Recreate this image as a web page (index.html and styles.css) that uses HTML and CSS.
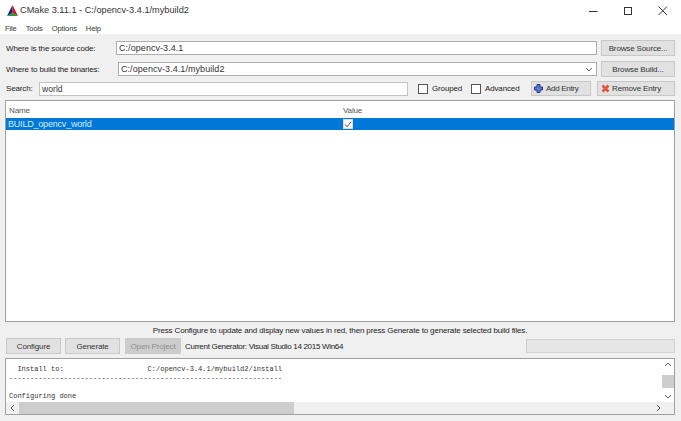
FILE: index.html
```
<!DOCTYPE html>
<html lang="en">
<head>
<meta charset="utf-8">
<title>CMake 3.11.1</title>
<link rel="stylesheet" href="styles.css">
</head>
<body>
<div class="window">
  <header class="titlebar">
    <svg class="app-icon" width="13" height="13" viewBox="0 0 13 13"><polygon points="6.5,1 1,12 6.5,9" fill="#1a1a9c"/><polygon points="6.5,1 12,12 6.5,9" fill="#d01818"/><polygon points="1,12 12,12 6.5,9" fill="#1a9c2a"/></svg>
    <span class="title">CMake 3.11.1 - C:/opencv-3.4.1/mybuild2</span>
    <div class="winbtns">
      <svg width="14" height="14" viewBox="0 0 14 14"><path d="M1 7.5H9.5" stroke="#333" fill="none"/></svg>
      <svg width="14" height="14" viewBox="0 0 14 14"><rect x="2.5" y="3.5" width="7" height="7" stroke="#333" fill="none"/></svg>
      <svg width="14" height="14" viewBox="0 0 14 14"><path d="M2.5 2.5L11 11M11 2.5L2.5 11" stroke="#333" fill="none"/></svg>
    </div>
  </header>
  <nav class="menubar"><span>File</span><span>Tools</span><span>Options</span><span>Help</span></nav>
  <main class="content">
    <div class="row row-source">
      <label class="lbl lbl-source">Where is the source code:</label>
      <div class="input grow">C:/opencv-3.4.1</div>
      <button class="btn btn-browse">Browse Source...</button>
    </div>
    <div class="row row-build">
      <label class="lbl lbl-build">Where to build the binaries:</label>
      <div class="input grow combo">C:/opencv-3.4.1/mybuild2
        <svg width="8" height="5" viewBox="0 0 8 5"><path d="M1 1L4 4L7 1" stroke="#666" fill="none"/></svg>
      </div>
      <button class="btn btn-browse">Browse Build...</button>
    </div>
    <div class="row row-search">
      <label class="lbl lbl-search">Search:</label>
      <div class="input search">world</div>
      <span class="check first"><i class="box"></i>Grouped</span>
      <span class="check"><i class="box"></i>Advanced</span>
      <button class="btn btn-add"><svg width="9" height="9" viewBox="0 0 9 9"><path d="M3 0.5H6V3H8.5V6H6V8.5H3V6H0.5V3H3Z" fill="#5a7fd0" stroke="#25348a"/></svg>Add Entry</button>
      <button class="btn btn-remove"><svg width="9" height="9" viewBox="0 0 9 9"><path d="M1.5 1.5L7.5 7.5M7.5 1.5L1.5 7.5" stroke="#e0553a" stroke-width="2.6"/></svg>Remove Entry</button>
    </div>
    <section class="table">
      <div class="thead"><span class="col-name">Name</span><span>Value</span></div>
      <div class="tr"><span class="col-name">BUILD_opencv_world</span><i class="box checked"><svg width="9" height="9" viewBox="0 0 9 9"><path d="M1 4.5L3.5 7L8 1.5" stroke="#333" fill="none"/></svg></i></div>
    </section>
    <p class="status">Press Configure to update and display new values in red, then press Generate to generate selected build files.</p>
    <div class="row row-actions">
      <button class="btn btn-act">Configure</button>
      <button class="btn btn-act">Generate</button>
      <button class="btn btn-open" disabled>Open Project</button>
      <span class="generator">Current Generator: Visual Studio 14 2015 Win64</span>
      <div class="progress"></div>
    </div>
    <section class="log">
      <div class="log-main">
        <pre class="log-text">  Install to:                    C:/opencv-3.4.1/mybuild2/install
-----------------------------------------------------------------

Configuring done</pre>
        <div class="vscroll">
          <svg width="8" height="5" viewBox="0 0 8 5"><path d="M1 4L4 1L7 4" stroke="#555" fill="none"/></svg>
          <div class="vtrack"><div class="vthumb"></div></div>
          <svg width="8" height="5" viewBox="0 0 8 5"><path d="M1 1L4 4L7 1" stroke="#555" fill="none"/></svg>
        </div>
      </div>
      <div class="hscroll">
        <svg width="5" height="8" viewBox="0 0 5 8"><path d="M4 1L1 4L4 7" stroke="#555" fill="none"/></svg>
        <div class="htrack"><div class="hthumb"></div></div>
        <svg width="5" height="8" viewBox="0 0 5 8"><path d="M1 1L4 4L1 7" stroke="#555" fill="none"/></svg>
      </div>
    </section>
  </main>
</div>
</body>
</html>
```
FILE: styles.css
```
* { box-sizing: border-box; }
html, body { margin: 0; padding: 0; }
body { width: 681px; height: 421px; overflow: hidden; font-family: "Liberation Sans", Arial, sans-serif; font-size: 8px; letter-spacing: -0.14px; color: #222; }
.window { width: 681px; height: 421px; display: flex; flex-direction: column; background: #f0f0f0; }
.titlebar { height: 22px; background: #fff; display: flex; align-items: center; padding-left: 6px; }
.app-icon { margin-right: 1px; margin-top: -2px; }
.title { font-size: 9.2px; letter-spacing: 0; color: #333; margin-top: -2px; }
.winbtns { margin-left: auto; display: flex; gap: 20px; padding-right: 11px; margin-top: -1px; }
.menubar { height: 12px; background: #fff; display: flex; gap: 9px; padding-left: 5px; align-items: center; font-size: 7.5px; letter-spacing: -0.1px; color: #333; }
.content { flex: 1; display: flex; flex-direction: column; padding: 6px 6px 0 5px; }
.row { display: flex; align-items: center; }
.row-source { height: 16px; }
.row-build { height: 16px; margin-top: 5px; }
.row-search { height: 15px; margin-top: 4px; }
.lbl { flex: none; padding-left: 1px; }
.lbl-source { width: 111px; }
.lbl-build { width: 113px; }
.lbl-search { width: 34px; }
.input { background: #fff; border: 1px solid #adadad; height: 14px; line-height: 12px; padding-left: 2px; color: #333; font-size: 9px; letter-spacing: 0.06px; }
.grow { flex: 1; }
.combo { display: flex; align-items: center; justify-content: space-between; padding-right: 3px; }
.search { width: 369px; flex: none; border-color: #c4c4c4; font-size: 8.5px; }
.btn { font: inherit; letter-spacing: inherit; color: #333; height: 100%; background: #e1e1e1; border: 1px solid #c8c8c8; padding: 0; display: flex; align-items: center; justify-content: center; gap: 3px; }
.btn-browse { width: 74px; margin-left: 4px; }
.btn-add { width: 60px; margin-left: auto; justify-content: flex-start; padding-left: 2px; letter-spacing: -0.3px; }
.btn-remove { width: 78px; margin-left: 6px; justify-content: flex-start; padding-left: 3px; gap: 2px; }
.check { display: flex; align-items: center; gap: 4px; }
.check.first { margin-left: 10px; width: 53px; }
.box { display: block; width: 10px; height: 10px; border: 1px solid #555; background: #fff; flex: none; }
.table { height: 222px; margin-top: 4px; background: #fff; border: 1px solid #a0a0a0; flex: none; }
.thead { height: 17px; display: flex; align-items: center; color: #555; font-size: 8px; padding-top: 1px; }
.col-name { width: 337px; padding-left: 3px; flex: none; }
.tr { height: 12px; background: #0078d7; display: flex; align-items: center; color: #d8ecfb; font-size: 9px; letter-spacing: -0.2px; }
.tr .col-name { padding-left: 2px; }
.checked { display: flex; align-items: center; justify-content: center; border-color: #ddd; }
.status { margin: 0; height: 16px; line-height: 16px; padding-top: 1px; text-align: center; flex: none; }
.row-actions { height: 16px; }
.btn-act { width: 55px; margin-left: 1px; margin-right: 4px; }
.btn-act + .btn-act { margin-left: 0; margin-right: 5px; }
.btn-open { width: 56px; background: #ccc; border-color: #ccc; color: #8f8f8f; }
.generator { margin-left: 4px; letter-spacing: -0.3px; }
.progress { margin-left: auto; width: 149px; height: 14px; background: #e6e6e6; border: 1px solid #d0d0d0; }
.log { height: 57px; margin-top: 4px; background: #fff; border: 1px solid #a0a0a0; display: flex; flex-direction: column; flex: none; overflow: hidden; }
.log-main { flex: 1; display: flex; min-height: 0; }
.log-text { flex: 1; margin: 0; padding: 6px 0 0 3px; font-family: "Liberation Mono", "Courier New", monospace; font-size: 7px; letter-spacing: 0; line-height: 9px; color: #333; overflow: hidden; }
.vscroll { width: 12px; display: flex; flex-direction: column; align-items: center; justify-content: space-between; padding: 3px 0; }
.vtrack { flex: 1; width: 100%; padding-top: 8px; }
.vthumb { height: 13px; background: #cdcdcd; }
.hscroll { height: 12px; background: #f0f0f0; display: flex; align-items: center; padding: 0 13px 0 4px; gap: 4px; }
.htrack { flex: 1; height: 100%; }
.hthumb { width: 275px; height: 100%; background: #cdcdcd; }
```
